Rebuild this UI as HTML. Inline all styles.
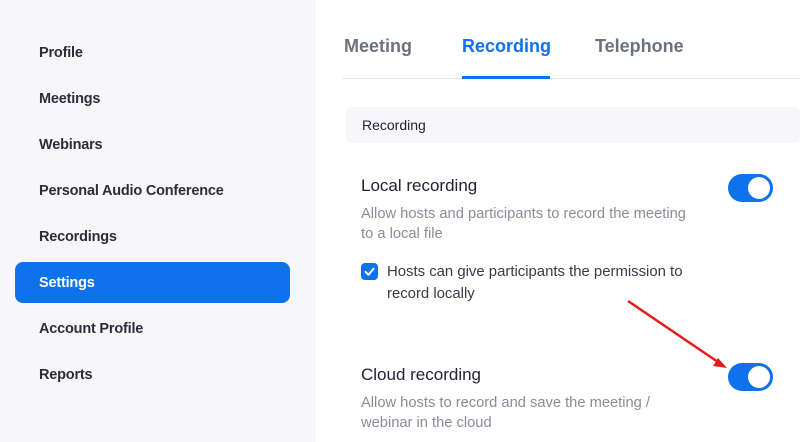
<!DOCTYPE html>
<html><head><style>
body{margin:0;width:800px;height:442px;overflow:hidden;font-family:"Liberation Sans",sans-serif;background:#fff;position:relative}
.side{position:absolute;left:0;top:0;width:316px;height:442px;background:#f7f7fa}
.nav{position:absolute;left:39px;font-size:14.5px;font-weight:bold;color:#2d2d3a;letter-spacing:-0.2px}
.sel{position:absolute;left:15px;top:262px;width:275px;height:41px;background:#0e72ed;border-radius:8px}
.tab{position:absolute;top:36px;font-size:18px;font-weight:bold;color:#6e7180}
.abs{position:absolute}
.tog{position:absolute;left:728px;width:45px;height:28px;border-radius:14px;background:#0e72ed}
.tog::after{content:"";position:absolute;right:3px;top:3px;width:22px;height:22px;border-radius:50%;background:#fff}
.h{font-size:17px;color:#232333}
.d{font-size:14.7px;color:#8a8b99;line-height:20px}
</style></head><body>
<div class="side"></div>
<div class="sel"></div>
<div class="nav" style="top:45px">Profile</div>
<div class="nav" style="top:91px">Meetings</div>
<div class="nav" style="top:137px">Webinars</div>
<div class="nav" style="top:183px">Personal Audio Conference</div>
<div class="nav" style="top:229px">Recordings</div>
<div class="nav" style="top:275px;color:#fff">Settings</div>
<div class="nav" style="top:321px">Account Profile</div>
<div class="nav" style="top:367px">Reports</div>

<div class="tab" style="left:344px">Meeting</div>
<div class="tab" style="left:462px;color:#0e72ed">Recording</div>
<div class="tab" style="left:595px">Telephone</div>
<div class="abs" style="left:342px;top:78px;width:458px;height:1px;background:#e8e8ee"></div>
<div class="abs" style="left:462px;top:76px;width:88px;height:3px;background:#0e72ed"></div>

<div class="abs" style="left:346px;top:107px;width:454px;height:36px;background:#f7f7fa;border-radius:6px"></div>
<div class="abs" style="left:362px;top:117px;font-size:14px;color:#232333">Recording</div>

<div class="abs h" style="left:361px;top:176px">Local recording</div>
<div class="abs d" style="left:361px;top:204px">Allow hosts and participants to record the meeting<br>to a local file</div>
<div class="tog" style="top:174px"></div>
<div class="abs" style="left:361px;top:263px;width:17px;height:17px;border-radius:4px;background:#0e72ed"></div>
<svg class="abs" style="left:361px;top:263px" width="17" height="17"><path d="M4.5 8.8l3 3 5-6" stroke="#fff" stroke-width="2" fill="none" stroke-linecap="round" stroke-linejoin="round"/></svg>
<div class="abs" style="left:387px;top:261px;font-size:14.9px;color:#3a3a48;line-height:22px">Hosts can give participants the permission to<br>record locally</div>

<div class="abs h" style="left:361px;top:365px">Cloud recording</div>
<div class="abs d" style="left:361px;top:393px">Allow hosts to record and save the meeting /<br>webinar in the cloud</div>
<div class="tog" style="top:363px"></div>
<svg class="abs" style="left:0;top:0" width="800" height="442"><line x1="628" y1="301" x2="718" y2="362" stroke="#e51b1b" stroke-width="2.5"/><path d="M727 368l-14-2 5-8z" fill="#e51b1b"/></svg>
</body></html>
